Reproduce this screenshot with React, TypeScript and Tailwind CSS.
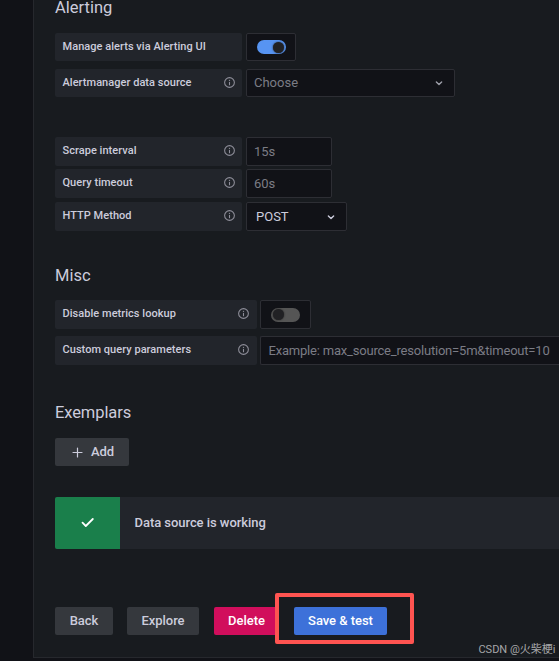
import type { ReactNode } from 'react';
import clsx from 'clsx';

const InfoIcon = () => (
  <svg className="h-[13px] w-[13px] shrink-0" viewBox="0 0 24 24" fill="#8e8e99">
    <path d="M12 2a10 10 0 1 0 0 20 10 10 0 0 0 0-20Zm0 18a8 8 0 1 1 0-16 8 8 0 0 1 0 16Zm0-9.5a1 1 0 0 0-1 1v4.5a1 1 0 0 0 2 0v-4.5a1 1 0 0 0-1-1Zm0-3.75a1.25 1.25 0 1 0 0 2.5 1.25 1.25 0 0 0 0-2.5Z" />
  </svg>
);

const ChevronIcon = ({ className }: { className?: string }) => (
  <svg className={clsx('h-[14px] w-[14px]', className)} viewBox="0 0 24 24" fill="none" stroke="currentColor" strokeWidth="2.4" strokeLinecap="round" strokeLinejoin="round">
    <path d="m7.5 10.2 4.5 4.5 4.5-4.5" />
  </svg>
);

const Label = ({ children, info = true, className }: { children: ReactNode; info?: boolean; className?: string }) => (
  <div
    className={clsx(
      'flex shrink-0 items-center justify-between rounded-[2px] bg-[#22252b] pb-[2px] pl-[7.5px] text-[11px] font-medium tracking-[0.04px]',
      className
    )}
  >
    <span className="pt-[2px]">{children}</span>
    {info && <InfoIcon />}
  </div>
);

const Switch = ({ checked = false, className }: { checked?: boolean; className?: string }) => (
  <div className={clsx('flex items-center rounded-[2px] border border-[#2d2e34] bg-[#111217] pl-[10px]', className)}>
    <div className={clsx('flex h-[14px] w-[29px] items-center rounded-full', checked ? 'justify-end bg-[#5794f2] pr-[2px]' : 'bg-[#555555] pl-[2px]')}>
      <div className="h-[11px] w-[11px] rounded-full bg-[#212124] shadow-[0_0_2px_#222]"></div>
    </div>
  </div>
);

const fieldStyle = 'flex items-center rounded-[2px] border border-[#2d2e34] bg-[#111217] text-[13px]';

const Button = ({ children, className }: { children: ReactNode; className?: string }) => (
  <button className={clsx('flex h-7 shrink-0 items-center justify-center rounded-[2px] text-[13px] font-medium tracking-[-0.04px]', className)}>
    {children}
  </button>
);

const intervals = [
  { label: 'Scrape interval', value: '15s', gap: 'mb-[3px]' },
  { label: 'Query timeout', value: '60s', gap: 'mb-[4px]' },
];

const App = () => {
  return (
    <div className="relative h-[661px] w-[559px] overflow-hidden bg-[#111217] pl-[33px] font-['Roboto',sans-serif] text-[#ccccdc]">
      <main className="h-[658px] border-b border-l border-[#26282d] bg-[#181b1f] pl-[21px]">
        {/* Alerting */}
        <h3 className="h-[33px] text-[16.5px] leading-[15px]">Alerting</h3>
        <div className="mb-2 flex h-7 gap-1">
          <Label info={false} className="w-[187px]">Manage alerts via Alerting UI</Label>
          <Switch checked className="w-[50px]" />
        </div>
        <div className="mb-10 flex h-7 gap-1">
          <Label className="w-[187px] pr-[6px]">Alertmanager data source</Label>
          <div className={clsx(fieldStyle, 'w-[209px] justify-between pr-2 pl-[7px] text-[#7b7c85]')}>
            Choose
            <ChevronIcon className="text-[#9fa0aa]" />
          </div>
        </div>

        {/* Query settings */}
        {intervals.map(({ label, value, gap }) => (
          <div key={label} className={clsx('flex h-[29px] gap-1', gap)}>
            <Label className="w-[187px] pr-[6px]">{label}</Label>
            <div className={clsx(fieldStyle, 'w-[86px] pl-[7px] text-[#7b7c85]')}>{value}</div>
          </div>
        ))}
        <div className="mb-[35px] flex h-[29px] gap-1">
          <Label className="w-[187px] pr-[6px]">HTTP Method</Label>
          <div className={clsx(fieldStyle, 'w-[101px] justify-between pr-2 pl-[9px]')}>
            POST
            <ChevronIcon />
          </div>
        </div>

        {/* Misc */}
        <h3 className="mb-[14px] text-[16.5px] leading-5">Misc</h3>
        <div className="mb-[7px] flex h-[29px] gap-[3px]">
          <Label className="w-[202px] pr-[7px]">Disable metrics lookup</Label>
          <Switch className="w-[51px]" />
        </div>
        <div className="mb-[38px] flex h-[29px] gap-[3px]">
          <Label className="w-[202px] pr-[7px]">Custom query parameters</Label>
          <div className={clsx(fieldStyle, 'flex-1 rounded-r-none border-r-0 pl-[7.5px] tracking-[-0.2px] whitespace-nowrap text-[#7b7c85]')}>
            Example: max_source_resolution=5m&amp;timeout=10
          </div>
        </div>

        {/* Exemplars */}
        <h3 className="mb-[15px] text-[16.5px] leading-5 tracking-[-0.1px]">Exemplars</h3>
        <Button className="w-[74px] gap-[6px] bg-[#35383d]">
          <svg className="h-[15px] w-[15px]" viewBox="0 0 15 15" stroke="currentColor" strokeWidth="1.2" strokeLinecap="round">
            <path d="M7.5 3v9M3 7.5h9" />
          </svg>
          Add
        </Button>

        {/* Status */}
        <div className="mt-[31px] mb-[58px] flex h-[52px] items-center rounded-l-[2px] bg-[#22252b] text-[13px] font-medium tracking-[-0.05px]">
          <div className="mr-[14.5px] flex h-full w-[65px] items-center justify-center rounded-l-[2px] bg-[#1a7f4b]">
            <svg className="h-[18px] w-[18px]" viewBox="0 0 18 18" fill="none" stroke="#fff" strokeWidth="1.8" strokeLinecap="round" strokeLinejoin="round">
              <path d="m3.5 8.7 3.3 3.3 7-7" />
            </svg>
          </div>
          Data source is working
        </div>

        <div className="flex">
          <Button className="mr-[14px] w-[58px] bg-[#35383d]">Back</Button>
          <Button className="mr-[15px] w-[72px] bg-[#35383d]">Explore</Button>
          <Button className="mr-[15px] w-[65px] bg-[#d10e5c] text-white">Delete</Button>
          <Button className="w-[93px] bg-[#3d71d9] text-white">Save &amp; test</Button>
        </div>
      </main>

      {/* Highlight around the save button */}
      <div className="absolute top-[593px] left-[275px] h-[51px] w-[139px] rounded-[2px] border-4 border-[#ff5451]"></div>
      <span className="absolute top-[643px] right-[3.5px] font-['Roboto','Noto_Sans_CJK_SC',sans-serif] text-[11px] leading-[14px] whitespace-nowrap text-[#a6a7a9]">
        CSDN @火柴梗i
      </span>
    </div>
  );
};

export default App;
